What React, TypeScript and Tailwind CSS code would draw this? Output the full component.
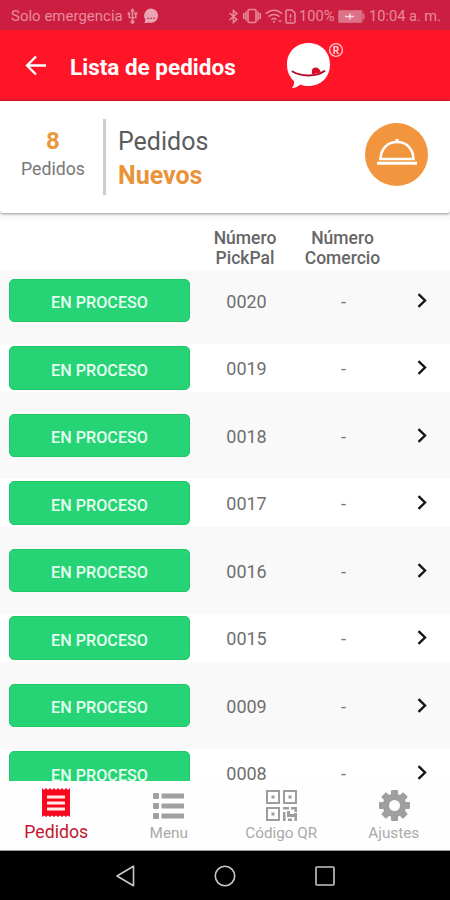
import React from "react";

const orders = ["0020", "0019", "0018", "0017", "0016", "0015", "0009", "0008"];

function StatusBar() {
  return (
    <div className="flex h-[30px] shrink-0 items-center bg-[#cb1e40] pt-[2px] text-[15px] leading-none whitespace-nowrap text-[#e88b9d]">
      <span className="ml-[11px] w-[112px]">Solo emergencia</span>
      <svg className="ml-[4px] shrink-0" width="11" height="16" viewBox="0 0 11 16" fill="currentColor">
        <path d="M5.5 0 8 3.5H6.3V9H8V6.5H7.3V4.2h3v2.3h-.8V10.3H6.3v1.9a1.9 1.9 0 1 1-1.6 0V10.3H1.5V6.8H.7V4.2h2.6v2.6H3V9h1.7V3.5H3z" />
      </svg>
      <svg className="ml-[5px] shrink-0" width="16" height="16" viewBox="0 0 16 16" fill="#eba5b3">
        <path d="M8 .5a7.2 7.2 0 1 1-2.2 14.1L1.5 15.2l.8-3.6A7.2 7.2 0 0 1 8 .5z" />
        <path d="M4 10.300h2M7 10.300h2M10 10.300h2" fill="none" stroke="#cb1e40" strokeWidth="1" />
      </svg>
      <svg className="ml-[69px] shrink-0" width="11" height="15" viewBox="0 0 11 15" fill="none" stroke="currentColor" strokeWidth="1.5">
        <path d="M1.5 4 8.8 10.5 5.4 13.5V1.5L8.8 4.5 1.5 11" />
      </svg>
      <svg className="ml-[4px] shrink-0" width="18" height="16" viewBox="0 0 18 16" fill="none" stroke="currentColor" strokeWidth="1.6">
        <rect x="5" y="1.5" width="8" height="13" rx="1.2" />
        <path d="M3 3.5v9M15 3.5v9M.8 5v6M17.2 5v6" />
      </svg>
      <svg className="ml-[4px] shrink-0" width="18" height="15" viewBox="0 0 18 15" fill="none" stroke="currentColor" strokeWidth="1.5">
        <path d="M.8 4.6q8.2-6.6 16.4 0M3.5 7.6q5.5-4.3 11 0M6.3 10.5q2.7-2 5.4 0" />
        <circle cx="9" cy="12.8" r="1" fill="currentColor" stroke="none" />
        <path d="m13.5 11 1.5 2 1.5-2" strokeWidth="1" />
      </svg>
      <svg className="ml-[2px] shrink-0" width="11" height="15" viewBox="0 0 11 15" fill="none" stroke="currentColor" strokeWidth="1.5">
        <path d="M1 2.2Q1 1 2.2 1h4.6L10 4v8.7q0 1.3-1.2 1.3H2.2Q1 14 1 12.700zM5.500 5v4M5.500 10.500v1.500" />
      </svg>
      <span className="ml-[3px] w-[38px] text-[14.700px]">100%</span>
      <svg className="ml-px shrink-0" width="27" height="13" viewBox="0 0 27 13">
        <rect x=".5" y=".5" width="23.500" height="12" rx="1" fill="#dc7187" stroke="#d9657d" />
        <rect x="24.500" y="3.500" width="2" height="6" fill="#dc7187" />
        <path d="M7 6.500h9M12 3.500v6" stroke="#f6d5dc" strokeWidth="1.500" />
      </svg>
      <span className="ml-[4px] text-[14.600px]">10:04 a. m.</span>
    </div>
  );
}

function AppBar() {
  return (
    <div className="flex h-[71px] shrink-0 border-b-2 border-[#e21a2b] bg-[#ff1527] text-white">
      <svg className="mt-[25px] ml-[25px] shrink-0" width="22" height="21" viewBox="0 0 22 21" fill="none" stroke="currentColor" strokeWidth="2.300">
        <path d="M21 10.500H2.500M11 1.500l-9 9 9 9" />
      </svg>
      <h1 className="mt-[22px] ml-[23px] w-[170px] text-[22.500px] leading-[30px] font-bold whitespace-nowrap">Lista de pedidos</h1>
      <svg className="mt-[11px] ml-[46px] shrink-0" width="46" height="48" viewBox="0 0 46 48">
        <path d="M22.500 2C35 2 44 11 44 23.500S35 45 22.500 45c-3 0-5.500-.5-8-1.500-2.500 2-5 3.300-8.500 3.500 1.800-2.300 2.500-4.500 2-7C3.500 36 1 30.500 1 23.500 1 11 10 2 22.500 2z" fill="#fff" />
        <path d="M6.500 30.500c8 5 24 5.500 32-.5" fill="none" stroke="#b70c25" strokeWidth="2" strokeLinecap="round" />
        <path d="M26 33.500c-.5-4 0-7 3.500-7 3 0 4.500 2.500 5.500 5z" fill="#d90d28" />
      </svg>
      <svg className="mt-[12px] -ml-[4px] shrink-0" width="16" height="16" viewBox="0 0 16 16">
        <circle cx="8" cy="8" r="6.400" fill="none" stroke="#ffc7cc" strokeWidth="1.300" />
        <text x="8" y="11.600" textAnchor="middle" fill="#ffd2d6" fontFamily="Roboto" fontWeight="700" fontSize="10">R</text>
      </svg>
    </div>
  );
}

function Summary() {
  return (
    <section className="relative z-10 flex h-[112px] shrink-0 rounded-b-[3px] bg-white shadow-[0_1px_3px_rgba(0,0,0,0.4)]">
      <div className="flex w-[103px] flex-col items-center pl-[3px]">
        <span className="mt-[25px] text-[24px] leading-[30px] font-bold text-[#e9993b]">8</span>
        <span className="mt-[2px] text-[17.700px] leading-[22px] text-[#777]">Pedidos</span>
      </div>
      <div className="mt-[18px] h-[76px] w-[3px] bg-[#ccc]" />
      <div className="ml-[12px] w-[247px]">
        <p className="mt-[25px] text-[25px] leading-[32px] text-[#5c5c5c]">Pedidos</p>
        <p className="mt-[1px] text-[25px] leading-[34px] font-bold text-[#e9933a]">Nuevos</p>
      </div>
      <div className="mt-[22px] flex size-[63px] items-center justify-center rounded-full bg-[#f2953f]">
        <svg className="-mt-[5px]" width="40" height="28" viewBox="0 0 40 28" fill="none" stroke="#fff" strokeWidth="2.600">
          <path d="M3.500 21C4 10.500 10.500 4 20 4s16 6.500 16.500 17z" />
          <path d="M18.500 1h3v3h-3z" fill="#fff" stroke="none" />
          <path d="M0 25.300h40" strokeWidth="3" />
        </svg>
      </div>
    </section>
  );
}

function OrderRow({ code, white }: { code: string; white: boolean }) {
  return (
    <div className={`mb-[19px] flex h-[48.500px] shrink-0 pt-[2.500px] pl-[9px] ${white ? "bg-white" : "bg-[#f9f9f9]"}`}>
      <button className="h-[43.500px] w-[181px] rounded-[5px] border border-[#20c868] bg-[#26d375] pt-[6px] text-[16.200px] font-medium text-[#e4fff0]">
        EN PROCESO
      </button>
      <span className="w-[113px] pt-[10px] text-center text-[18px] leading-[25px] text-[#6f6f6f]">{code}</span>
      <span className="w-[81px] pt-[10px] text-center text-[18px] leading-[25px] text-[#777]">-</span>
      <svg className="mt-[14px] ml-[33px] shrink-0" width="11" height="15" viewBox="0 0 11 15" fill="none" stroke="#151515" strokeWidth="2.400">
        <path d="m1.500 1.200 6.500 6.300-6.500 6.300" />
      </svg>
    </div>
  );
}

function OrderList() {
  return (
    <main className="flex h-[568px] shrink-0 flex-col overflow-hidden bg-[#f9f9f9] pt-[7px]">
      <div className="mb-[6px] flex h-[50px] shrink-0 bg-white pt-[8px] pl-[195px] text-center text-[17.500px] leading-[20px] font-medium text-[#666]">
        <div className="w-[100px]">Número<br />PickPal</div>
        <div className="w-[95px]">Número<br />Comercio</div>
      </div>
      {orders.map((code, i) => (
        <OrderRow key={code} code={code} white={i % 2 === 1} />
      ))}
    </main>
  );
}

function TabBar() {
  return (
    <nav className="grid h-[70px] shrink-0 grid-cols-4 border-b border-[#999] bg-[#fefefe] text-center text-[15.300px] leading-[20px] text-[#aaa]">
      <div className="flex flex-col items-center text-[17.700px] text-[#c4142f]">
        <svg className="mt-[6px]" width="30" height="31" viewBox="0 0 30 31">
          <path d="M1 1l2 2 2-2 2 2 2-2 2 2 2-2 2 2 2-2 2 2 2-2 2 2 2-2 2 2 2-2v29l-2-1.500-2 1.500-2-1.500-2 1.500-2-1.500-2 1.500-2-1.500-2 1.500-2-1.500-2 1.500-2-1.500-2 1.500-2-1.500-2 1.500z" fill="#f8081f" />
          <path d="M6 10h18M6 16h18M6 22h18" stroke="#ffe9e9" strokeWidth="3" />
        </svg>
        <span className="mt-[4px]">Pedidos</span>
      </div>
      <div className="flex flex-col items-center">
        <svg className="mt-[12px]" width="31" height="26" viewBox="0 0 31 26" fill="#a0a0a0">
          <rect x="0" y="0" width="6" height="6" rx="1" />
          <rect x="0" y="10" width="6" height="6" rx="1" />
          <rect x="0" y="20" width="6" height="6" rx="1" />
          <path d="M8.500.5H31v5H8.500zM8.500 10.500H31v5H8.500zM8.500 20.500H31v5H8.500z" />
        </svg>
        <span className="mt-[4px]">Menu</span>
      </div>
      <div className="flex flex-col items-center">
        <svg className="mt-[9px]" width="31" height="31" viewBox="0 0 31 31" fill="#9d9d9d">
          <g fill="none" stroke="#9d9d9d" strokeWidth="2">
            <path d="M1 1h12v12H1zM18 1h12v12H18zM1 18h12v12H1z" />
          </g>
          <path d="M5.500 5.500h3v3h-3zM22.500 5.500h3v3h-3zM5.500 22.500h3v3h-3zM17 17h6v2.500h-6zM25 17h6v5h-2.500v-2.500H25zM17 22h2.500v9H17zM21 21h3v3h4v-1h3v8h-2.500v-4H21zM22 28.500h4V31h-4z" />
        </svg>
        <span className="mt-[2px]">Código QR</span>
      </div>
      <div className="flex flex-col items-center">
        <svg className="mt-[9px] ml-px" width="31" height="31" viewBox="0 0 31 31">
          <g fill="#9f9f9f">
            <circle cx="15.500" cy="15.500" r="11.800" />
            <rect x="12" y="0" width="7" height="31" rx="1" />
            <rect x="12" y="0" width="7" height="31" rx="1" transform="rotate(45 15.500 15.500)" />
            <rect x="12" y="0" width="7" height="31" rx="1" transform="rotate(90 15.500 15.500)" />
            <rect x="12" y="0" width="7" height="31" rx="1" transform="rotate(135 15.500 15.500)" />
          </g>
          <circle cx="15.500" cy="15.500" r="5.500" fill="#fefefe" />
        </svg>
        <span className="mt-[2px]">Ajustes</span>
      </div>
    </nav>
  );
}

function SystemNav() {
  return (
    <footer className="flex h-[49px] shrink-0 items-center gap-[78px] bg-black pl-[115px]">
      <svg width="21" height="22" viewBox="0 0 21 22" fill="none" stroke="#c8c8c8" strokeWidth="1.600">
        <path d="M18.500 1.200v19.600L2 11z" strokeLinejoin="round" />
      </svg>
      <svg width="22" height="22" viewBox="0 0 22 22" fill="none" stroke="#c8c8c8" strokeWidth="1.600">
        <circle cx="11" cy="11" r="9.700" />
      </svg>
      <svg width="22" height="22" viewBox="0 0 22 22" fill="none" stroke="#c8c8c8" strokeWidth="1.600">
        <rect x="2" y="2" width="18" height="18" rx="1" />
      </svg>
    </footer>
  );
}

export default function App() {
  return (
    <div className="flex h-[900px] w-[450px] flex-col overflow-hidden bg-white font-['Roboto',sans-serif]">
      <StatusBar />
      <AppBar />
      <Summary />
      <OrderList />
      <TabBar />
      <SystemNav />
    </div>
  );
}
